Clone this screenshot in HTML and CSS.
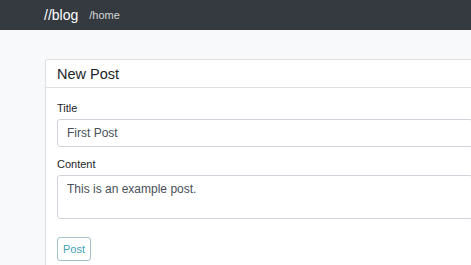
FILE: index.html
```html
<!DOCTYPE html>
<html lang="en">
<head>
    <meta charset="UTF-8">
    <title>blog</title>
    <link rel="stylesheet" href="styles.css">
</head>
<body>
<nav class="navbar">
    <a class="brand" href="#">//blog</a>
    <a class="nav-link" href="#">/home</a>
</nav>
<div class="container">
    <div class="card">
        <div class="card-header">New Post</div>
        <form class="card-body">
            <div class="form-group">
                <label for="title">Title</label>
                <input class="form-control" id="title" type="text" value="First Post">
            </div>
            <div class="form-group">
                <label for="content">Content</label>
                <textarea class="form-control area" id="content">This is an example post.</textarea>
            </div>
            <button class="btn" type="button">Post</button>
        </form>
    </div>
</div>
</body>
</html>
```

FILE: styles.css
```css
* {
    margin: 0;
    padding: 0;
    box-sizing: border-box;
}

html, body {
    height: 100%;
    overflow: hidden;
}

body {
    background-color: #f8f9fa;
    font-family: "Liberation Sans", Arial, sans-serif;
    color: #212529;
}

.navbar { /* 顶部导航 */
    height: 30px;
    background-color: #343a40;
    display: flex;
    align-items: center;
    padding-left: 44px;
}

.navbar a {
    text-decoration: none;
}

.brand {
    color: #fff;
    font-size: 14px;
    margin-right: 11px;
}

.nav-link {
    color: rgba(255, 255, 255, .8);
    font-size: 11px;
}

.container {
    padding: 29px 0 0 45px;
}

.card {
    width: 440px;
    margin-right: -60px;
    background-color: #fff;
    border: 1px solid rgba(0, 0, 0, .125);
    border-radius: 3px;
}

.card-header {
    height: 28px;
    padding: 0 11px;
    font-size: 14.5px;
    line-height: 29px;
    border-bottom: 1px solid rgba(0, 0, 0, .125);
}

.card-body {
    padding: 13px 11px 12px;
}

.form-group {
    margin-bottom: 10px;
}

label {
    display: block;
    font-size: 11px;
    line-height: 15px;
    margin-bottom: 3px;
}

.form-control {
    display: block;
    width: 100%;
    height: 28px;
    padding: 0 9px;
    font-family: inherit;
    font-size: 12px;
    color: #495057;
    border: 1px solid #ced4da;
    border-radius: 3px;
    background-color: #fff;
}

.area {
    height: 44px;
    padding-top: 6px;
    resize: none;
    line-height: 1.3;
}

.btn { /* 提交按钮 */
    margin-top: 8px;
    height: 24px;
    width: 34px;
    font-family: inherit;
    font-size: 11px;
    color: #3fa2b4;
    background: transparent;
    border: 1px solid #a3c4ca;
    border-radius: 3px;
}
```
